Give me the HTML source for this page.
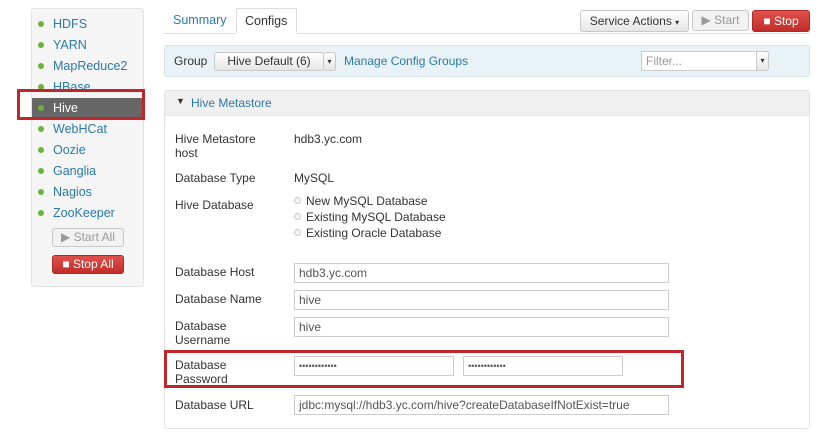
<!DOCTYPE html>
<html><head><style>
*{box-sizing:border-box;margin:0;padding:0}
body{width:830px;height:434px;background:#fff;font-family:"Liberation Sans",sans-serif;font-size:12px;color:#333;position:relative;overflow:hidden}
.a{position:absolute}
.lnk{color:#2a7aa8}
.side{left:31px;top:8px;width:113px;height:279px;background:#f5f5f5;border:1px solid #e3e3e3;border-radius:3px}
.it{position:absolute;left:0;width:111px;height:20px;line-height:20px;padding-left:21px;color:#2a7aa8;font-size:12.5px}
.it:before{content:"";position:absolute;left:6px;top:7px;width:6px;height:6px;border-radius:50%;background:#6cb33e}
.btn{position:absolute;border:1px solid #c8c8c8;border-radius:3px;background:linear-gradient(#fff,#e6e6e6);text-align:center;font-size:12px;color:#333}
.red{background:linear-gradient(#e0504a,#c12e2a);border-color:#b02b27;color:#fff}
.inp{position:absolute;border:1px solid #ccc;height:20px;line-height:18px;padding-left:4px;color:#555;font-size:12px;background:#fff}
.lb{position:absolute;left:175px;line-height:14px;font-size:12px;color:#333}
.rd{position:absolute;left:294px;width:7px;height:7px;border:1px solid #ccc;border-radius:50%;background:#f4f4f4}
</style></head><body>
<div class="a side">
<div class="it" style="top:5px">HDFS</div>
<div class="it" style="top:26px">YARN</div>
<div class="it" style="top:47px">MapReduce2</div>
<div class="it" style="top:68px">HBase</div>
<div class="it" style="top:89px;background:#666;color:#fff">Hive</div>
<div class="it" style="top:110px">WebHCat</div>
<div class="it" style="top:131px">Oozie</div>
<div class="it" style="top:152px">Ganglia</div>
<div class="it" style="top:173px">Nagios</div>
<div class="it" style="top:194px">ZooKeeper</div>
</div>
<div class="btn" style="left:52px;top:228px;width:72px;height:19px;line-height:17px;color:#999;background:#f2f2f2">▶ Start All</div>
<div class="btn red" style="left:52px;top:255px;width:72px;height:19px;line-height:17px">■ Stop All</div>
<div class="a" style="left:17px;top:89px;width:128px;height:31px;border:3px solid #c0272d"></div>

<div class="a lnk" style="left:173px;top:13px;font-size:12.5px">Summary</div>
<div class="a" style="left:236px;top:8px;width:61px;height:26px;border:1px solid #ddd;border-bottom:none;background:#fff;padding:5px 0 0 8px;font-size:12.5px">Configs</div>
<div class="a" style="left:164px;top:33px;width:645px;height:1px;background:#ddd"></div>
<div class="a" style="left:236px;top:33px;width:61px;height:1px;background:#fff"></div>
<div class="btn" style="left:580px;top:10px;width:109px;height:22px;line-height:20px">Service Actions <span style="font-size:8px">▾</span></div>
<div class="btn" style="left:692px;top:10px;width:57px;height:21px;line-height:19px;color:#999;background:#f2f2f2">▶ Start</div>
<div class="btn red" style="left:752px;top:10px;width:58px;height:22px;line-height:20px">■ Stop</div>

<div class="a" style="left:164px;top:45px;width:646px;height:32px;background:#e9f2f7;border:1px solid #d4e2ea;border-radius:3px"></div>
<div class="a" style="left:174px;top:54px">Group</div>
<div class="btn" style="left:214px;top:52px;width:110px;height:19px;line-height:17px">Hive Default (6)</div>
<div class="btn" style="left:323px;top:52px;width:13px;height:19px;line-height:17px;font-size:8px">▾</div>
<div class="a lnk" style="left:344px;top:54px">Manage Config Groups</div>
<div class="inp" style="left:641px;top:51px;width:116px;color:#999">Filter...</div>
<div class="btn" style="left:756px;top:51px;width:13px;height:20px;line-height:18px;font-size:8px">▾</div>

<div class="a" style="left:164px;top:90px;width:646px;height:339px;border:1px solid #e3e3e3;border-radius:3px"></div>
<div class="a" style="left:165px;top:91px;width:644px;height:25px;background:#f0f0f0;border-bottom:1px solid #e3e3e3"></div>
<div class="a" style="left:176px;top:96px;font-size:9px">▼</div>
<div class="a lnk" style="left:191px;top:96px">Hive Metastore</div>

<div class="lb" style="top:132px">Hive Metastore<br>host</div>
<div class="a" style="left:294px;top:132px">hdb3.yc.com</div>
<div class="lb" style="top:171px">Database Type</div>
<div class="a" style="left:294px;top:171px">MySQL</div>
<div class="lb" style="top:198px">Hive Database</div>
<div class="rd" style="top:197px"></div><div class="a" style="left:306px;top:194px">New MySQL Database</div>
<div class="rd" style="top:213px"></div><div class="a" style="left:306px;top:210px">Existing MySQL Database</div>
<div class="rd" style="top:229px"></div><div class="a" style="left:306px;top:226px">Existing Oracle Database</div>

<div class="lb" style="top:265px">Database Host</div>
<div class="inp" style="left:294px;top:263px;width:375px">hdb3.yc.com</div>
<div class="lb" style="top:292px">Database Name</div>
<div class="inp" style="left:294px;top:290px;width:375px">hive</div>
<div class="lb" style="top:319px">Database<br>Username</div>
<div class="inp" style="left:294px;top:317px;width:375px">hive</div>
<div class="lb" style="top:358px">Database<br>Password</div>
<div class="inp" style="left:294px;top:356px;width:160px;font-size:9px">••••••••••••</div>
<div class="inp" style="left:463px;top:356px;width:160px;font-size:9px">••••••••••••</div>
<div class="a" style="left:164px;top:350px;width:520px;height:38px;border:3px solid #c0272d"></div>
<div class="lb" style="top:398px">Database URL</div>
<div class="inp" style="left:294px;top:395px;width:375px">jdbc:mysql://hdb3.yc.com/hive?createDatabaseIfNotExist=true</div>
</body></html>
